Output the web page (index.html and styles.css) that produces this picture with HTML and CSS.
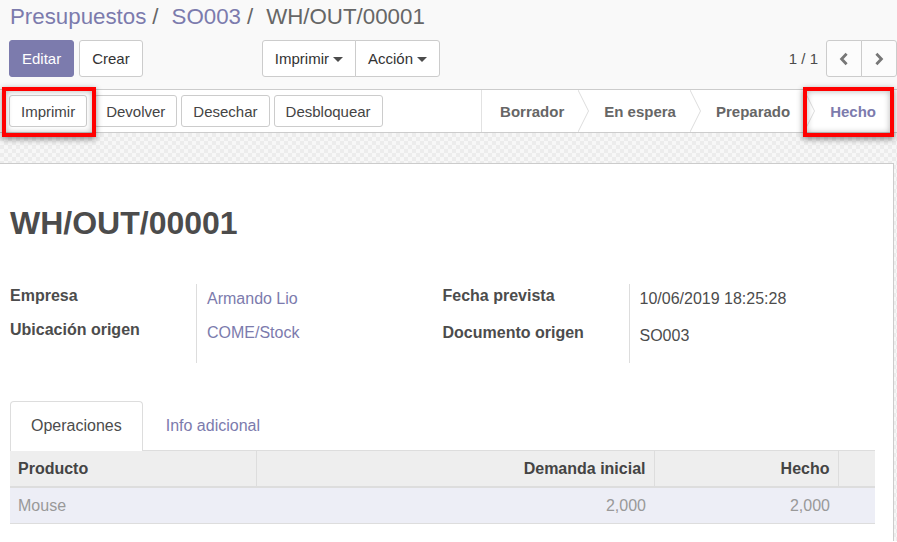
FILE: index.html
```html
<!DOCTYPE html>
<html lang="es">
<head>
<meta charset="utf-8">
<title>WH/OUT/00001</title>
<link rel="stylesheet" href="styles.css">
</head>
<body>
<div class="cp">
  <div class="crumbs">
    <span class="crumb link">Presupuestos</span><span class="sep">/</span><span class="crumb link">SO003</span><span class="sep">/</span><span class="crumb cur">WH/OUT/00001</span>
  </div>
  <div class="cp-row">
    <div class="cp-left">
      <div class="btns">
        <button class="btn primary">Editar</button>
        <button class="btn">Crear</button>
      </div>
      <div class="group">
        <button class="btn">Imprimir<span class="caret"></span></button>
        <button class="btn">Acción<span class="caret"></span></button>
      </div>
    </div>
    <div class="cp-right">
      <span class="pager-val">1 / 1</span>
      <div class="group pager">
        <button class="btn icon"><svg width="10" height="14" viewBox="0 0 10 14"><path d="M7.6 1.8 L2.6 7 L7.6 12.2" fill="none" stroke="#777" stroke-width="2.8"/></svg></button>
        <button class="btn icon"><svg width="10" height="14" viewBox="0 0 10 14"><path d="M2.4 1.8 L7.4 7 L2.4 12.2" fill="none" stroke="#777" stroke-width="2.8"/></svg></button>
      </div>
    </div>
  </div>
</div>

<div class="statusbar">
  <div class="sb-btns">
    <button class="btn sb first">Imprimir</button>
    <button class="btn sb">Devolver</button>
    <button class="btn sb">Desechar</button>
    <button class="btn sb">Desbloquear</button>
  </div>
  <div class="states">
    <span class="state">Borrador</span>
    <svg class="chev" width="11" height="42" viewBox="0 0 11 42"><polyline points="0,0 10.5,21 0,42" fill="none" stroke="#ddd" stroke-width="1"/></svg>
    <span class="state">En espera</span>
    <svg class="chev" width="11" height="42" viewBox="0 0 11 42"><polyline points="0,0 10.5,21 0,42" fill="none" stroke="#ddd" stroke-width="1"/></svg>
    <span class="state">Preparado</span>
    <svg class="chev" width="11" height="42" viewBox="0 0 11 42"><polyline points="0,0 10.5,21 0,42" fill="none" stroke="#ddd" stroke-width="1"/></svg>
    <span class="state current">Hecho</span>
  </div>
</div>

<div class="sheet-bg">
  <div class="sheet">
    <h1 class="title">WH/OUT/00001</h1>
    <div class="groups">
      <div class="fgroup">
        <div class="lbl">Empresa</div><div class="val link">Armando Lio</div>
        <div class="lbl last">Ubicación origen</div><div class="val link">COME/Stock</div>
      </div>
      <div class="fgroup">
        <div class="lbl">Fecha prevista</div><div class="val">10/06/2019 18:25:28</div>
        <div class="lbl last short">Documento origen</div><div class="val">SO003</div>
      </div>
    </div>
    <div class="tabs">
      <span class="tab active">Operaciones</span>
      <span class="tab">Info adicional</span>
    </div>
    <table class="lines">
      <colgroup>
        <col class="c-prod"><col class="c-dem"><col class="c-done"><col class="c-end">
      </colgroup>
      <thead>
        <tr><th>Producto</th><th class="num">Demanda inicial</th><th class="num">Hecho</th><th></th></tr>
      </thead>
      <tbody>
        <tr><td>Mouse</td><td class="num">2,000</td><td class="num">2,000</td><td></td></tr>
      </tbody>
    </table>
  </div>
</div>

<div class="mark mark-print"></div>
<div class="mark mark-done"></div>
</body>
</html>
```

FILE: styles.css
```css
* { box-sizing: border-box; }
body {
  margin: 0;
  font-family: "Liberation Sans", Arial, sans-serif;
  font-size: 16px;
  color: #4c4c4c;
  background: #fff;
}

/* control panel */
.cp { background: #f9f9f9; padding: 0 0 12px 9px; }
.crumbs { display: flex; font-size: 22.3px; line-height: 26px; padding: 4px 0 10px 1px; white-space: nowrap; }
.crumb.link { color: #7c7bad; }
.crumb.cur { color: #666; }
.sep { color: #666; margin: 0 13px 0 6px; }

.cp-row { display: grid; grid-template-columns: 1fr 1fr; }
.cp-left { display: flex; justify-content: space-between; padding-right: 13px; }
.btns { display: flex; gap: 5px; }
.btn {
  font: inherit; font-size: 15px;
  height: 37px; padding: 0 12px;
  border: 1px solid #ccc; border-radius: 3px;
  background: #fff; color: #333;
  display: inline-flex; align-items: center;
}
.btn.primary { background: #7c7bad; border-color: #7c7bad; color: #fff; }
.group { display: flex; }
.group .btn + .btn { margin-left: -1px; border-top-left-radius: 0; border-bottom-left-radius: 0; }
.group .btn:first-child:not(:last-child) { border-top-right-radius: 0; border-bottom-right-radius: 0; }
.caret {
  display: inline-block; width: 0; height: 0;
  border-top: 5px solid #4c4c4c;
  border-left: 5px solid transparent;
  border-right: 5px solid transparent;
  margin-left: 4px; margin-top: 1px;
}
.cp-right { display: flex; justify-content: flex-end; align-items: center; gap: 8px; }
.pager-val { font-size: 15px; color: #4c4c4c; }
.pager .btn { width: 36px; padding: 0; justify-content: center; background: #fcfcfc; }

/* status bar */
.statusbar {
  display: flex; height: 44px; background: #fff;
  border-top: 1px solid #ccc; border-bottom: 1px solid #ccc;
  padding-left: 9px;
}
.sb-btns { display: flex; gap: 4px; align-items: center; }
.btn.sb { height: 32px; padding: 0 11px; color: #444; }
.btn.sb.first { margin-right: 3px; }
.states { margin-left: auto; display: flex; align-items: stretch; border-left: 1px solid #e2e2e2; }
.state { display: flex; align-items: center; font-size: 15px; font-weight: bold; color: #666; padding: 0 14px 0 15px; white-space: nowrap; }
.state:first-child { padding-left: 18px; }
.state.current { color: #7c7bad; padding-right: 21px; }
.chev { display: block; flex: 0 0 11px; }

/* sheet */
.sheet-bg {
  padding-top: 30px;
  background-color: #f2f2f2;
  background-image: repeating-conic-gradient(#ececec 0 25%, #f7f7f7 0 50%);
  background-size: 8px 8px;
}
.sheet {
  background: #fff;
  border-top: 1px solid #ccc; border-right: 1px solid #ccc;
  margin-right: 3px;
  padding: 42px 18px 17px 10px;
}
.title { margin: 0; font-size: 32px; line-height: 35px; font-weight: bold; color: #4c4c4c; }

.groups { display: grid; grid-template-columns: 1fr 1fr; margin-top: 43px; }
.fgroup { display: grid; grid-template-columns: 187px 1fr; line-height: 20px; }
.lbl { font-weight: bold; padding: 2px 0 12px; border-right: 1px solid #ddd; color: #4c4c4c; }
.lbl.last { padding-bottom: 23px; }
.lbl.last.short { padding-bottom: 17px; }
.val { padding: 5px 0 0 10px; color: #4c4c4c; }
.val.link { color: #7c7bad; }

.tabs { display: flex; margin-top: 38px; border-bottom: 1px solid #ddd; }
.tab {
  padding: 14px 20px; line-height: 20px;
  border: 1px solid transparent; border-bottom: 0;
  border-radius: 4px 4px 0 0;
  margin-right: 2px; color: #7c7bad;
}
.tab.active { color: #4c4c4c; border-color: #ddd; background: #fff; margin-bottom: -1px; padding-bottom: 15px; }

.lines { width: 100%; border-collapse: collapse; table-layout: fixed; line-height: 20px; }
.c-prod { width: 246px; }
.c-dem { width: 398px; }
.c-done { width: 184px; }
.c-end { width: 37px; }
.lines th {
  background: #eee; text-align: left; font-weight: bold; color: #444;
  padding: 8px 8px 7px; border-bottom: 2px solid #ddd; border-left: 1px solid #ddd;
}
.lines th:first-child { border-left: 0; }
.lines td { background: #edeef6; color: #999; padding: 8px 8px 7px; border-bottom: 1px solid #ddd; }
.lines .num { text-align: right; }

/* annotation overlays */
.mark {
  position: absolute; border: 4px solid #f00; pointer-events: none;
  box-shadow: 0 2px 6px rgba(0,0,0,.45), inset 0 0 6px rgba(0,0,0,.3);
}
.mark-print { left: 2px; top: 87px; width: 94px; height: 50px; }
.mark-done { left: 803px; top: 87px; width: 91px; height: 50px; }
```
